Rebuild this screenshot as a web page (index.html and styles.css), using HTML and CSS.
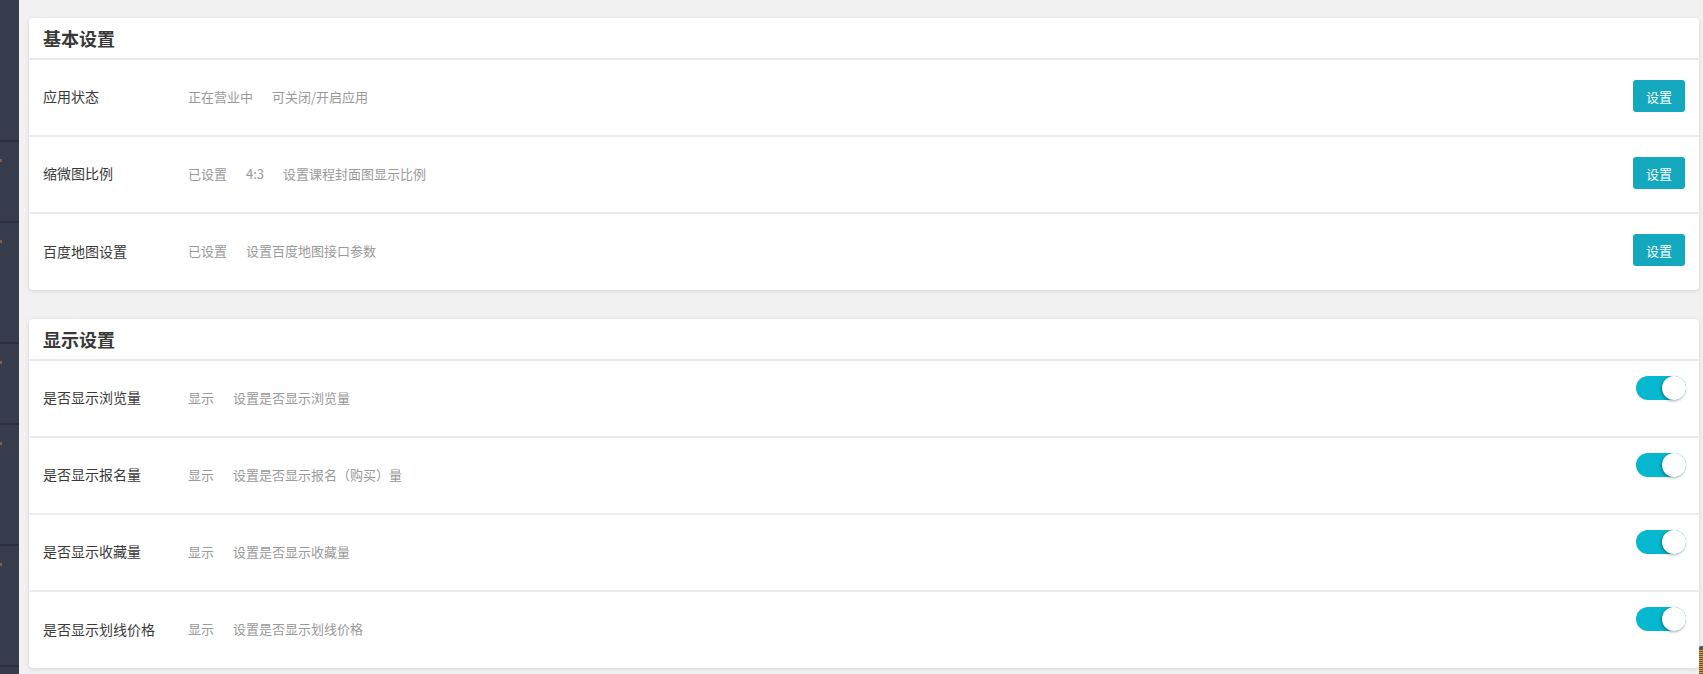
FILE: index.html
```html
<!DOCTYPE html>
<html lang="zh-CN">
<head>
<meta charset="utf-8">
<title>设置</title>
<link rel="stylesheet" href="styles.css">
</head>
<body>
<div class="layout">
  <aside class="sidebar">
    <div class="side-item s1"></div>
    <div class="side-item s2"><span class="dot"></span></div>
    <div class="side-item s3"><span class="dot"></span></div>
    <div class="side-item s2"><span class="dot"></span></div>
    <div class="side-item s3"><span class="dot"></span></div>
    <div class="side-item s3"><span class="dot"></span></div>
    <div class="side-item s4"></div>
  </aside>
  <main class="main">
    <section class="card">
      <div class="card-head">基本设置</div>
      <div class="row">
        <div class="label">应用状态</div>
        <div class="values"><span>正在营业中</span><span>可关闭/开启应用</span></div>
        <button class="btn">设置</button>
      </div>
      <div class="row">
        <div class="label">缩微图比例</div>
        <div class="values"><span>已设置</span><span>4:3</span><span>设置课程封面图显示比例</span></div>
        <button class="btn">设置</button>
      </div>
      <div class="row">
        <div class="label">百度地图设置</div>
        <div class="values"><span>已设置</span><span>设置百度地图接口参数</span></div>
        <button class="btn">设置</button>
      </div>
    </section>
    <section class="card">
      <div class="card-head">显示设置</div>
      <div class="row">
        <div class="label">是否显示浏览量</div>
        <div class="values"><span>显示</span><span>设置是否显示浏览量</span></div>
        <span class="toggle"><span class="knob"></span></span>
      </div>
      <div class="row">
        <div class="label">是否显示报名量</div>
        <div class="values"><span>显示</span><span>设置是否显示报名（购买）量</span></div>
        <span class="toggle"><span class="knob"></span></span>
      </div>
      <div class="row">
        <div class="label">是否显示收藏量</div>
        <div class="values"><span>显示</span><span>设置是否显示收藏量</span></div>
        <span class="toggle"><span class="knob"></span></span>
      </div>
      <div class="row">
        <div class="label">是否显示划线价格</div>
        <div class="values"><span>显示</span><span>设置是否显示划线价格</span></div>
        <span class="toggle"><span class="knob"></span></span>
      </div>
    </section>
  </main>
</div>
<div class="corner-widget"></div>
</body>
</html>
```
FILE: styles.css
```css
* { box-sizing: border-box; }
html, body {
  margin: 0;
  padding: 0;
  height: 100%;
  overflow: hidden;
}
body {
  background: #f1f1f1;
  font-family: "Noto Sans CJK SC", "Liberation Sans", sans-serif;
  color: #333;
}
.layout {
  display: flex;
  height: 674px;
}
.sidebar {
  width: 19px;
  flex: none;
  background: #373c4c;
  display: flex;
  flex-direction: column;
}
.side-item {
  position: relative;
  border-bottom: 2px solid #2c303d;
  flex: none;
}
.s1 { height: 142px; }
.s2 { height: 81px; }
.s3 { height: 121px; }
.s4 { height: 20px; border-bottom: none; }
.dot {
  position: absolute;
  left: 0;
  top: 17px;
  width: 2px;
  height: 3px;
  background: #8a5a3e;
}
.main {
  flex: 1;
  padding: 18px 4px 0 10px;
  display: flex;
  flex-direction: column;
  gap: 29px;
}
.card {
  background: #fff;
  border-radius: 4px;
  box-shadow: 0 1px 4px rgba(0, 0, 0, 0.12);
}
.card-head {
  height: 42px;
  display: flex;
  align-items: center;
  padding-left: 14px;
  font-size: 18px;
  font-weight: bold;
  color: #393939;
  border-bottom: 2px solid #ebebeb;
}
.row {
  height: 77px;
  display: flex;
  align-items: center;
  padding: 0 14px 3px 14px;
  border-bottom: 2px solid #ececec;
}
.row:last-child { border-bottom: none; height: 76px; }
.label {
  width: 145px;
  flex: none;
  font-size: 14px;
  color: #3a3a3a;
}
.values {
  flex: 1;
  display: flex;
  gap: 19px;
  font-size: 13px;
  color: #9a9a9a;
}
.btn {
  align-self: flex-start;
  margin-top: 20px;
  width: 52px;
  height: 32px;
  border: none;
  border-radius: 3px;
  background: #13a8bd;
  color: #fff;
  font-family: "Noto Sans CJK SC", sans-serif;
  font-size: 13px;
  padding: 0;
}
.toggle {
  align-self: flex-start;
  margin-top: 15px;
  margin-right: -1px;
  width: 50px;
  height: 24px;
  border-radius: 12px;
  background: #06b8cf;
  display: flex;
  justify-content: flex-end;
}
.knob {
  width: 24px;
  height: 24px;
  border-radius: 50%;
  background: #fff;
  box-shadow: -1px 1px 3px rgba(0, 0, 0, 0.35);
}
.corner-widget {
  position: absolute;
  right: 0;
  top: 646px;
  width: 4px;
  height: 28px;
  background: repeating-linear-gradient(#f39a1e 0 1px, #555 1px 2px);
  border-top: 4px solid #555;
  border-radius: 2px 0 0 0;
}
```
